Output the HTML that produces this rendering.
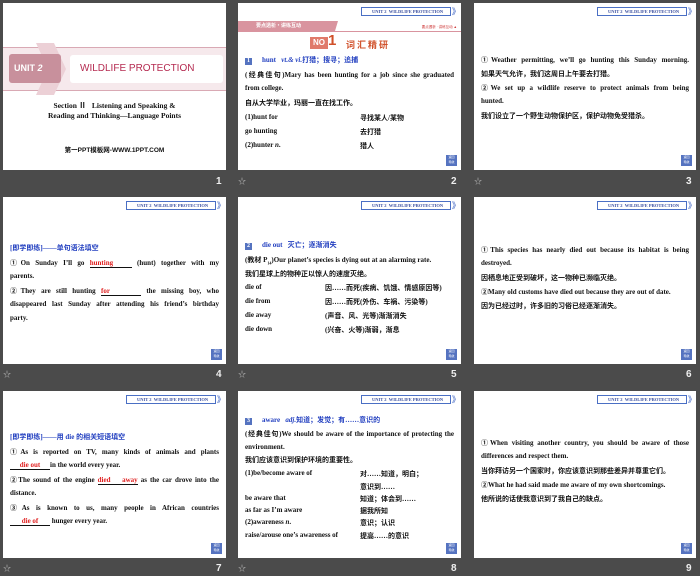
<!DOCTYPE html>
<html><head><meta charset="utf-8"><style>
*{margin:0;padding:0;box-sizing:border-box}
body{width:700px;height:576px;background:#4b4b4b;position:relative;overflow:hidden;font-family:"Liberation Serif","Noto Sans CJK SC",serif;}
.s{position:absolute;width:223px;height:167px;background:#fff;overflow:hidden;color:#111}
.n{position:absolute;color:#eee;font:bold 10px "Liberation Sans",sans-serif}
.st{position:absolute;color:#bbb;font:8px "Noto Sans CJK SC",sans-serif}
.tag{position:absolute;left:123px;top:4px;width:90px;height:9px;border:1px solid #4a6fc4;color:#3a4fa0;font:bold 4.5px "Liberation Serif",serif;line-height:7px;padding-left:10px;white-space:nowrap}
.tag:after{content:"》";position:absolute;right:-10px;top:-1px;font-size:8px;color:#7b95d6;line-height:9px}
.ic{position:absolute;right:4px;bottom:4px;width:11px;height:11px;background:#5573c0;color:#fff;font:3px sans-serif;text-align:center;line-height:5px}
.l{position:absolute;left:7px;right:7px;font-size:7px;font-weight:bold;white-space:nowrap}
.j{text-align:justify;text-align-last:justify}
.b{color:#2340c0}
.r{color:#e02020}
.u{display:inline-block;border-bottom:1px solid #111;text-align:center;color:#e02020;line-height:8px}
</style></head><body>

<!-- slide 1 -->
<div class="s" style="left:3px;top:3px">
 <div style="position:absolute;left:0;right:0;top:44px;height:44px;background:#f6e9ec;border-top:1px solid #d9a9b4;border-bottom:1px solid #d9a9b4"></div>
 <div style="position:absolute;left:33px;top:40px;width:30px;height:52px;background:#ecd0d6;clip-path:polygon(0 0,60% 0,100% 50%,60% 100%,0 100%,40% 50%)"></div>
 <div style="position:absolute;left:6px;top:51px;width:52px;height:29px;background:#c8909c;border-radius:3px;color:#fff;font:bold 9px 'Liberation Sans',sans-serif;line-height:29px;padding-left:5px">UNIT <i>2</i></div>
 <div style="position:absolute;left:67px;top:52px;width:153px;height:28px;background:#fff;border-radius:3px;color:#b52a50;font:10px 'Liberation Sans',sans-serif;line-height:28px;padding-left:10px">WILDLIFE PROTECTION</div>
 <div style="position:absolute;left:0;right:0;top:98px;text-align:center;font-size:7.5px;font-weight:bold;line-height:10px">Section Ⅱ&nbsp;&nbsp; Listening and Speaking &amp;<br>Reading and Thinking—Language Points</div>
 <div style="position:absolute;left:0;right:0;top:141px;text-align:center;font:bold 6.5px 'Liberation Sans','Noto Sans CJK SC',sans-serif">第一PPT模板网-WWW.1PPT.COM</div>
</div>
<div class="n" style="left:216px;top:176px">1</div>

<!-- slide 2 -->
<div class="s" style="left:238px;top:3px">
 <div class="tag">UNIT 2 &nbsp;WILDLIFE PROTECTION</div>
 <div style="position:absolute;left:0;top:18px;width:100px;height:10px;background:#d9949f;color:#fff;font:bold 5px 'Noto Sans CJK SC',sans-serif;line-height:10px;padding-left:18px;clip-path:polygon(0 0,100% 0,97% 100%,0 100%)">要点透析·讲练互动</div>
 <div style="position:absolute;left:0;right:0;top:28px;height:1px;background:#d9949f"></div>
 <div style="position:absolute;right:4px;top:22px;font-size:3.5px;color:#c33">要点透析 · 讲练互动 ▲</div>
 <div style="position:absolute;left:72px;top:34px;width:18px;height:12px;background:#e07a6a;color:#fff;font:bold 8px 'Liberation Sans';text-align:center;line-height:12px">NO</div>
 <div style="position:absolute;left:90px;top:29px;color:#d0502a;font:bold 15px 'Liberation Sans'">1</div>
 <div style="position:absolute;left:108px;top:35px;color:#d0502a;font:bold 9px 'Noto Sans CJK SC';letter-spacing:2px">词汇精研</div>
 <div class="l b" style="top:52px"><span style="display:inline-block;width:7px;height:7px;background:#5573c0;color:#fff;font-size:6px;text-align:center;line-height:7px;margin-right:10px">1</span>hunt &nbsp;&nbsp;<i>vt.&amp; vi.</i>打猎；搜寻；追捕</div>
 <div class="l j" style="top:67px">(经典佳句)Mary has been hunting for a job since she graduated</div>
 <div class="l" style="top:81px">from college.</div>
 <div class="l" style="top:95px">自从大学毕业，玛丽一直在找工作。</div>
 <div class="l" style="top:110px">(1)hunt for<span style="position:absolute;left:115px">寻找某人/某物</span></div>
 <div class="l" style="top:124px">go hunting<span style="position:absolute;left:115px">去打猎</span></div>
 <div class="l" style="top:138px">(2)hunter <i>n</i>.<span style="position:absolute;left:115px">猎人</span></div>
 <div class="ic">返回<br>导航</div>
</div>
<div class="st" style="left:238px;top:176px">☆</div>
<div class="n" style="left:451px;top:176px">2</div>

<!-- slide 3 -->
<div class="s" style="left:474px;top:3px;width:222px">
 <div class="tag">UNIT 2 &nbsp;WILDLIFE PROTECTION</div>
 <div class="l j" style="top:52px">①Weather permitting, we’ll go hunting this Sunday morning.</div>
 <div class="l" style="top:66px">如果天气允许，我们这周日上午要去打猎。</div>
 <div class="l j" style="top:80px">②We set up a wildlife reserve to protect animals from being</div>
 <div class="l" style="top:94px">hunted.</div>
 <div class="l" style="top:108px">我们设立了一个野生动物保护区，保护动物免受猎杀。</div>
 <div class="ic">返回<br>导航</div>
</div>
<div class="st" style="left:474px;top:176px">☆</div>
<div class="n" style="left:686px;top:176px">3</div>

<!-- slide 4 -->
<div class="s" style="left:3px;top:197px">
 <div class="tag">UNIT 2 &nbsp;WILDLIFE PROTECTION</div>
 <div class="l b" style="top:46px">[即学即练]——单句语法填空</div>
 <div class="l j" style="top:61px">①On Sunday I’ll go <span class="u" style="width:42px">hunting</span> (hunt) together with my</div>
 <div class="l" style="top:75px">parents.</div>
 <div class="l j" style="top:89px">②They are still hunting <span class="u" style="width:40px">for</span> the missing boy, who</div>
 <div class="l j" style="top:103px">disappeared last Sunday after attending his friend’s birthday</div>
 <div class="l" style="top:117px">party.</div>
 <div class="ic">返回<br>导航</div>
</div>
<div class="st" style="left:3px;top:369px">☆</div>
<div class="n" style="left:216px;top:369px">4</div>

<!-- slide 5 -->
<div class="s" style="left:238px;top:197px">
 <div class="tag">UNIT 2 &nbsp;WILDLIFE PROTECTION</div>
 <div class="l b" style="top:43px"><span style="display:inline-block;width:7px;height:7px;background:#5573c0;color:#fff;font-size:6px;text-align:center;line-height:7px;margin-right:10px">2</span>die out &nbsp;&nbsp;灭亡；逐渐消失</div>
 <div class="l" style="top:58px">(教材 P<sub style="font-size:4px">14</sub>)Our planet’s species is dying out at an alarming rate.</div>
 <div class="l" style="top:72px">我们星球上的物种正以惊人的速度灭绝。</div>
 <div class="l" style="top:86px">die of<span style="position:absolute;left:80px">因……而死(疾病、饥饿、情感原因等)</span></div>
 <div class="l" style="top:100px">die from<span style="position:absolute;left:80px">因……而死(外伤、车祸、污染等)</span></div>
 <div class="l" style="top:114px">die away<span style="position:absolute;left:80px">(声音、风、光等)渐渐消失</span></div>
 <div class="l" style="top:128px">die down<span style="position:absolute;left:80px">(兴奋、火等)渐弱，渐息</span></div>
 <div class="ic">返回<br>导航</div>
</div>
<div class="st" style="left:238px;top:369px">☆</div>
<div class="n" style="left:451px;top:369px">5</div>

<!-- slide 6 -->
<div class="s" style="left:474px;top:197px;width:222px">
 <div class="tag">UNIT 2 &nbsp;WILDLIFE PROTECTION</div>
 <div class="l j" style="top:48px">①This species has nearly died out because its habitat is being</div>
 <div class="l" style="top:62px">destroyed.</div>
 <div class="l" style="top:76px">因栖息地正受到破坏，这一物种已濒临灭绝。</div>
 <div class="l" style="top:90px">②Many old customs have died out because they are out of date.</div>
 <div class="l" style="top:104px">因为已经过时，许多旧的习俗已经逐渐消失。</div>
 <div class="ic">返回<br>导航</div>
</div>
<div class="n" style="left:686px;top:369px">6</div>

<!-- slide 7 -->
<div class="s" style="left:3px;top:391px">
 <div class="tag">UNIT 2 &nbsp;WILDLIFE PROTECTION</div>
 <div class="l b" style="top:41px">[即学即练]——用 die 的相关短语填空</div>
 <div class="l j" style="top:56px">①As is reported on TV, many kinds of animals and plants</div>
 <div class="l" style="top:70px"><span class="u" style="width:40px">die out</span>in the world every year.</div>
 <div class="l j" style="top:84px">②The sound of the engine <span class="u" style="width:40px">died away</span> as the car drove into the</div>
 <div class="l" style="top:98px">distance.</div>
 <div class="l j" style="top:112px">③As is known to us, many people in African countries</div>
 <div class="l" style="top:126px"><span class="u" style="width:40px">die of</span> hunger every year.</div>
 <div class="ic">返回<br>导航</div>
</div>
<div class="st" style="left:3px;top:563px">☆</div>
<div class="n" style="left:216px;top:563px">7</div>

<!-- slide 8 -->
<div class="s" style="left:238px;top:391px">
 <div class="tag">UNIT 2 &nbsp;WILDLIFE PROTECTION</div>
 <div class="l b" style="top:24px"><span style="display:inline-block;width:7px;height:7px;background:#5573c0;color:#fff;font-size:6px;text-align:center;line-height:7px;margin-right:10px">3</span>aware &nbsp;&nbsp;<i>adj.</i>知道；发觉；有……意识的</div>
 <div class="l j" style="top:38px">(经典佳句)We should be aware of the importance of protecting the</div>
 <div class="l" style="top:52px">environment.</div>
 <div class="l" style="top:64px">我们应该意识到保护环境的重要性。</div>
 <div class="l" style="top:78px">(1)be/become aware of<span style="position:absolute;left:115px">对……知道，明白；</span></div>
 <div class="l" style="top:91px"><span style="position:absolute;left:115px">意识到……</span></div>
 <div class="l" style="top:103px">be aware that<span style="position:absolute;left:115px">知道；体会到……</span></div>
 <div class="l" style="top:115px">as far as I’m aware<span style="position:absolute;left:115px">据我所知</span></div>
 <div class="l" style="top:127px">(2)awareness <i>n</i>.<span style="position:absolute;left:115px">意识；认识</span></div>
 <div class="l" style="top:140px">raise/arouse one’s awareness of<span style="position:absolute;left:115px">提高……的意识</span></div>
 <div class="ic">返回<br>导航</div>
</div>
<div class="st" style="left:238px;top:563px">☆</div>
<div class="n" style="left:451px;top:563px">8</div>

<!-- slide 9 -->
<div class="s" style="left:474px;top:391px;width:222px">
 <div class="tag">UNIT 2 &nbsp;WILDLIFE PROTECTION</div>
 <div class="l j" style="top:47px">①When visiting another country, you should be aware of those</div>
 <div class="l" style="top:61px">differences and respect them.</div>
 <div class="l" style="top:75px">当你拜访另一个国家时，你应该意识到那些差异并尊重它们。</div>
 <div class="l" style="top:89px">②What he had said made me aware of my own shortcomings.</div>
 <div class="l" style="top:103px">他所说的话使我意识到了我自己的缺点。</div>
 <div class="ic">返回<br>导航</div>
</div>
<div class="n" style="left:686px;top:563px">9</div>

</body></html>
